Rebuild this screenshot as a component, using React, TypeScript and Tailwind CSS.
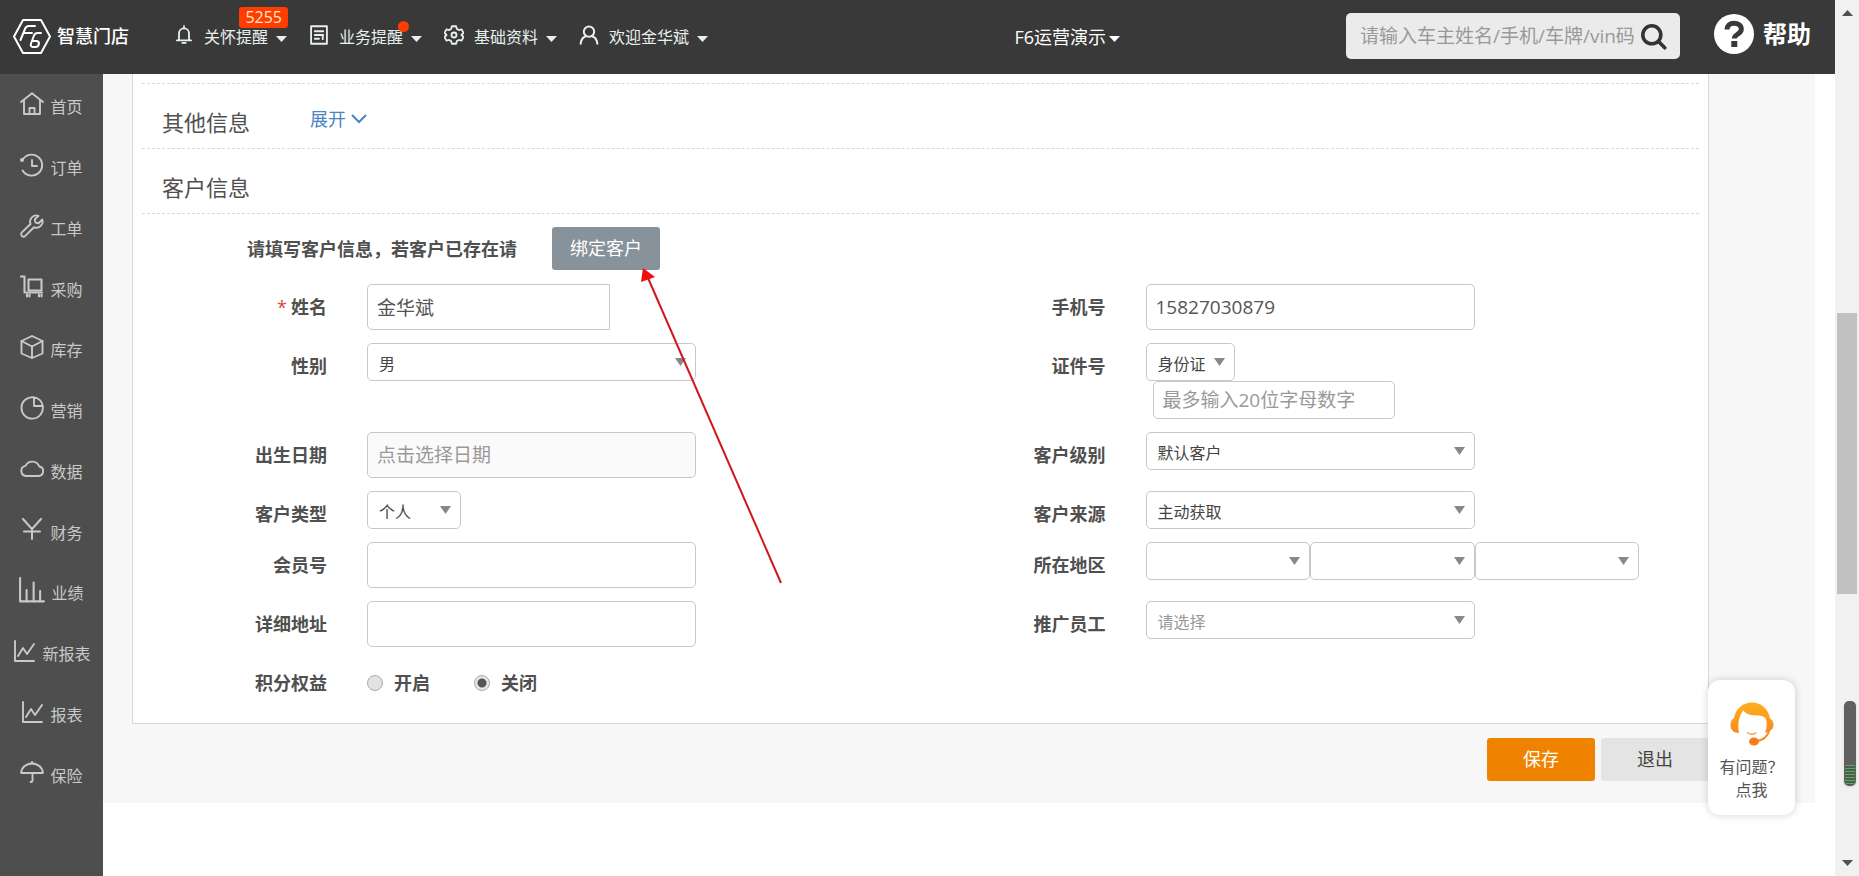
import React, { type ReactNode } from "react";

const ICON = "block shrink-0 fill-none stroke-current";

function Icon({ children, className = "size-6", width = 1.9 }: { children: ReactNode; className?: string; width?: number }) {
  return (
    <svg viewBox="0 0 24 24" className={`${ICON} ${className}`} strokeWidth={width} strokeLinecap="round" strokeLinejoin="round" aria-hidden="true">
      {children}
    </svg>
  );
}

function Caret() {
  return (
    <svg viewBox="0 0 11 6" className="block h-[6px] w-[11px] shrink-0 fill-current" aria-hidden="true">
      <path d="M0 0h11L5.5 6z" />
    </svg>
  );
}

const chartLine = (
  <>
    <path d="M3 2v20h19" />
    <path d="M6 17l5-8 4 6 7-10" />
  </>
);

const sideItems: { label: string; icon: ReactNode }[] = [
  {
    label: "首页",
    icon: (
      <Icon>
        <path d="M1 10L12 1.2 23 10" />
        <path d="M4 8v14h16V8" />
        <path d="M9.5 22v-6h5v6" />
      </Icon>
    ),
  },
  {
    label: "订单",
    icon: (
      <Icon>
        <path d="M2.2 7.5A10.5 10.5 0 1 1 2.6 17.5" />
        <path d="M12 7v6h5" />
        <circle cx="2" cy="7" r="1" fill="currentColor" />
      </Icon>
    ),
  },
  {
    label: "工单",
    icon: (
      <Icon>
        <path d="M18.5 1.8a6.3 6.3 0 0 0-8 8.2L1.9 18.4a2.3 2.3 0 0 0 3.4 3.4L14 13.3a6.3 6.3 0 0 0 8.3-7.8l-3.8 3.7-3-.6-.7-3.1z" />
      </Icon>
    ),
  },
  {
    label: "采购",
    icon: (
      <Icon width={2.1}>
        <path d="M.9 1.5h3.6V17.5H22" />
        <path d="M8.5 4.5h13v11h-13z" />
        <path d="M7 19.5v2M9.500 19.500v2M19 19.500v2M21.500 19.500v2" />
      </Icon>
    ),
  },
  {
    label: "库存",
    icon: (
      <Icon>
        <path d="M12 1l10.500 5v12.500L12 23 1.500 18.500V6z" />
        <path d="M1.500 6L12 11.500 22.500 6M12 11.500V23" />
      </Icon>
    ),
  },
  {
    label: "营销",
    icon: (
      <Icon>
        <path d="M14 1.400A10.700 10.700 0 1 0 22.700 10" />
        <path d="M14 1.400V10h8.700A9.500 9.500 0 0 0 14 1.400z" />
      </Icon>
    ),
  },
  {
    label: "数据",
    icon: (
      <Icon>
        <path d="M6 19h12.500a4.800 4.800 0 0 0 .8-9.500A7.500 7.500 0 0 0 5.500 8.900 5.100 5.100 0 0 0 6 19z" />
      </Icon>
    ),
  },
  {
    label: "财务",
    icon: (
      <Icon width={2}>
        <path d="M3 1l9 10 9-10M12 11v10M4 13.500h16" />
      </Icon>
    ),
  },
  {
    label: "业绩",
    icon: (
      <Icon className="size-[26px]">
        <path d="M1 1v21.500h22M7 22V12M13.500 22V5M19.500 22v-9" />
      </Icon>
    ),
  },
  { label: "新报表", icon: <Icon>{chartLine}</Icon> },
  { label: "报表", icon: <Icon>{chartLine}</Icon> },
  {
    label: "保险",
    icon: (
      <Icon>
        <path d="M1.200 12a10.800 9.500 0 0 1 21.600 0z" />
        <path d="M12 .9v1.600M12.500 12v7.500a1.800 1.800 0 0 1-2 1.500" />
      </Icon>
    ),
  },
];

const CONTROL = "rounded-[5px] border border-[#c8c8c8] text-[#555] outline-none";

function Field({ id, label, required, children }: { id: string; label: string; required?: boolean; children: ReactNode }) {
  return (
    <div className="grid grid-cols-[185px_1fr] gap-x-10">
      <label htmlFor={id} className="pt-[9px] text-right text-[18px] leading-7 font-bold">
        {required && <span className="mr-1 font-normal text-[#d04a48]">*</span>}
        {label}
      </label>
      <div>{children}</div>
    </div>
  );
}

function Select({ id, options, width, muted, name }: { id: string; options: string[]; width: string; muted?: boolean; name?: string }) {
  return (
    <div className={`relative ${width}`}>
      <select
        id={id}
        aria-label={name}
        className={`block h-[38px] w-full appearance-none rounded-[5px] border border-[#c8c8c8] bg-white pt-1 pr-6 pl-[11px] text-[16px] outline-none ${muted ? "text-[#999]" : "text-[#444]"}`}
      >
        {options.map((o) => (
          <option key={o}>{o}</option>
        ))}
      </select>
      <svg viewBox="0 0 11 8" className="pointer-events-none absolute top-[15px] right-[10px] h-2 w-[11px] fill-[#888]" aria-hidden="true">
        <path d="M0 0h11L5.500 8z" />
      </svg>
    </div>
  );
}

function Input({ id, value, placeholder, className = "" }: { id: string; value?: string; placeholder?: string; className?: string }) {
  return (
    <input
      id={id}
      type="text"
      defaultValue={value}
      placeholder={placeholder}
      className={`${CONTROL} block px-[9px] text-[19px] placeholder:text-[#999] ${className}`}
    />
  );
}

function Row({ children }: { children: ReactNode }) {
  return <div className="grid grid-cols-2 pb-[13px]">{children}</div>;
}

function Radio({ id, label, checked }: { id: string; label: string; checked?: boolean }) {
  return (
    <label htmlFor={id} className="flex items-center gap-[11px] text-[18px] leading-7 font-bold">
      <input
        id={id}
        type="radio"
        name="points"
        defaultChecked={checked}
        className="size-4 appearance-none rounded-full border border-[#aaa] bg-[#e2e2e2] checked:bg-[radial-gradient(circle,#555_0_4px,#e6e6e6_5px)]"
      />
      {label}
    </label>
  );
}

function NavItem({ icon, label, badge }: { icon: ReactNode; label: string; badge?: ReactNode }) {
  return (
    <a href="#" className="relative flex items-center text-[#e8f0ee]">
      <span className="-mt-1">{icon}</span>
      <span className="ml-[10px] text-[16px] leading-6">{label}</span>
      <span className="mt-1 ml-2">
        <Caret />
      </span>
      {badge}
    </a>
  );
}

function Header() {
  return (
    <header className="flex h-[74px] shrink-0 items-center bg-[#393939] pr-6 pl-[13px] text-white">
      <a href="#" className="-mt-[2px] flex items-center gap-[6px]">
        <svg viewBox="0 0 38 35" className="block h-[35px] w-[38px] fill-none stroke-current" strokeWidth="2" strokeLinejoin="round" strokeLinecap="round" aria-hidden="true">
          <path d="M10 1h18l9 16.500L28 34H10L1 17.500z" />
          <path d="M22 7h-6q-3 0-4 3L7.500 21M10.500 14h8.500" />
          <path d="M28 14h-3.500q-2.500 0-3.500 2.500L18 24.500q-1 3.500 2 3.500h2.500q2.500 0 3.300-2.500t-1.800-3.500h-4" />
        </svg>
        <span className="text-[18px] leading-6 font-medium">智慧门店</span>
      </a>
      <nav className="ml-[45px] flex items-center gap-[22px]">
        <NavItem
          label="关怀提醒"
          icon={
            <Icon className="size-5" width={2.2}>
              <path d="M3.500 18.500h17M6 18V10a6 6 0 0 1 12 0v8M12 1.500V4M10 21.500h4" />
            </Icon>
          }
          badge={
            <span className="absolute -top-[18px] -right-px rounded-[3px] bg-[#ff3d00] px-[6px] text-[16px] leading-[21px] text-[#ffe9c8]">5255</span>
          }
        />
        <NavItem
          label="业务提醒"
          icon={
            <Icon className="size-5" width={2.2}>
              <path d="M2.500 1.500h19v21h-19zM7 7.500h10M7 12h10M7 16.500h5M16.500 12v5" />
            </Icon>
          }
          badge={<span className="absolute -top-1 right-[13px] size-[11px] rounded-full bg-[#ff3d00]" />}
        />
        <NavItem
          label="基础资料"
          icon={
            <Icon className="size-5" width={2.2}>
              <path d="M9.500 1.500h5l1 3.300 2.200 1.300 3.400-.8 2.300 4.200L21 12l2.400 2.500-2.300 4.200-3.400-.8-2.200 1.300-1 3.300h-5l-1-3.300-2.200-1.300-3.400.8L.6 14.500 3 12 .6 9.500l2.300-4.200 3.400.8 2.200-1.300z" />
              <circle cx="12" cy="12" r="3" />
            </Icon>
          }
        />
        <NavItem
          label="欢迎金华斌"
          icon={
            <Icon className="size-5" width={2.400}>
              <circle cx="12" cy="8" r="6.200" />
              <path d="M2 22.500c.5-5 3-8 6.500-9M22 22.500c-.5-5-3-8-6.500-9" />
            </Icon>
          }
        />
      </nav>
      <button type="button" className="ml-auto flex items-center gap-[3px] text-[18px] leading-6">
        F6运营演示
        <span className="mt-1">
          <Caret />
        </span>
      </button>
      <form className="-mt-[2px] ml-[226px] flex h-[46px] w-[334px] items-center rounded-[5px] bg-[#ebebeb] pr-[13px] pl-[14px]">
        <input
          type="text"
          aria-label="搜索"
          placeholder="请输入车主姓名/手机/车牌/vin码"
          className="min-w-0 flex-1 bg-transparent text-[19px] text-[#555] outline-none placeholder:text-[#999]"
        />
        <button type="button" aria-label="查询" className="text-[#333]">
          <Icon className="size-[27px]" width={3.200}>
            <circle cx="10.500" cy="10.500" r="8" />
            <path d="M16.500 16.500l5.500 5.500" />
          </Icon>
        </button>
      </form>
      <a href="#" className="-mt-[6px] ml-[34px] flex items-center gap-[9px]">
        <svg viewBox="0 0 40 40" className="block size-10" aria-hidden="true">
          <circle cx="20" cy="20" r="20" fill="#fff" />
          <path d="M13 15.500c0-4 3-6.300 7-6.300s7.300 2.300 7.300 6c0 5-7 5-7 9.300" fill="none" stroke="#393939" strokeWidth="5" />
          <path d="M17.300 27h6v6h-6z" fill="#393939" />
        </svg>
        <span className="text-[24px] leading-8 font-bold">帮助</span>
      </a>
    </header>
  );
}

function ScrollTrack() {
  return (
    <div className="relative w-6 shrink-0 bg-[#f1f1f1]" aria-hidden="true">
      <svg viewBox="0 0 11 6" className="absolute top-[10px] left-[7px] h-[6px] w-[11px] fill-[#505050]">
        <path d="M0 6h11L5.500 0z" />
      </svg>
      <div className="absolute inset-x-[2px] top-[313px] h-[281px] bg-[#c1c1c1]" />
      <div className="absolute top-[701px] left-[9px] flex h-[85px] w-3 flex-col justify-end rounded-[5px] bg-[#606060] p-px shadow">
        <div className="h-5 rounded-b-[4px] bg-[repeating-linear-gradient(#4fae62_0_1px,#4f5a50_1px_3px)]" />
      </div>
      <svg viewBox="0 0 11 6" className="absolute bottom-[10px] left-[7px] h-[6px] w-[11px] fill-[#505050]">
        <path d="M0 0h11L5.500 6z" />
      </svg>
    </div>
  );
}

function ServiceIcon() {
  return (
    <svg viewBox="0 0 44 44" className="block size-11" aria-hidden="true">
      <defs>
        <linearGradient id="hair" x1="0" y1="0" x2="0" y2="1">
          <stop offset="0" stopColor="#ffb01f" />
          <stop offset="1" stopColor="#f98a1c" />
        </linearGradient>
      </defs>
      <path
        d="M22 .5C12.500.5 5.500 7 4 16 1.500 17.500.5 20 .5 23c0 4.500 3 8 8.500 8C7.500 23 8.500 15 13 8.500c3 3.500 7.500 5 12 4.700 4.500-.2 8 .8 10.500 2.800 2 5 1.500 10-.5 14.500 2 0 3.500-.5 4.500-1.500 2.500-1 4-3 4-6.500 0-2.500-1.200-4.800-3.500-6C38.500 7 31.500.5 22 .5z"
        fill="url(#hair)"
      />
      <path d="M39.500 28c-2 7-6 10.500-14 11.500" fill="none" stroke="#f98a1c" strokeWidth="2" />
      <ellipse cx="24" cy="39.500" rx="5" ry="4" fill="#f9791c" />
      <path d="M17 30.500q5 3.500 9.500 0" fill="none" stroke="#f0a04a" strokeWidth="1.500" />
    </svg>
  );
}

export default function App() {
  return (
    <div className="relative flex min-h-screen bg-white font-['Open_Sans','Noto_Sans_CJK_SC',sans-serif] text-[#505050]">
      <div className="flex min-w-0 flex-1 flex-col">
        <Header />
        <div className="flex flex-1">
          <aside className="w-[103px] shrink-0 bg-[#4e4e4e] text-[#c9c9c9]">
            <nav className="grid h-[729px] auto-rows-fr">
              {sideItems.map((item) => (
                <a key={item.label} href="#" className="flex items-center justify-center gap-[6px]">
                  {item.icon}
                  <span className="pt-[6px] text-[16px] leading-6">{item.label}</span>
                </a>
              ))}
            </nav>
          </aside>
          <main className="relative min-w-0 flex-1 pr-5">
            <div className="bg-[#f7f7f7] pr-[106px] pb-[22px] pl-[29px]">
              <section className="border border-t-0 border-[#d8d8d8] bg-white px-[9px] pt-[9px] pb-[17px]">
                <div className="flex h-[65px] items-center border-t border-dashed border-[#d8d8d8] pt-3 pl-5">
                  <h2 className="text-[22px] leading-8">其他信息</h2>
                  <button type="button" className="mb-[6px] ml-[60px] flex items-center gap-[5px] text-[18px] leading-7 text-[#4a84c4]">
                    展开
                    <svg viewBox="0 0 16 10" className="block h-[10px] w-4 fill-none stroke-current" strokeWidth="2" aria-hidden="true">
                      <path d="M1 1l7 7 7-7" />
                    </svg>
                  </button>
                </div>
                <div className="flex h-[66px] items-center border-y border-dashed border-[#d8d8d8] pt-3 pl-5">
                  <h2 className="text-[22px] leading-8">客户信息</h2>
                </div>
                <div className="flex items-center pt-[13px] pb-[14px] pl-[105px]">
                  <p className="w-[305px] text-[18px] leading-7 font-bold">请填写客户信息，若客户已存在请</p>
                  <button type="button" className="h-[43px] w-[108px] rounded-[3px] bg-[#87929b] text-[18px] text-white">
                    绑定客户
                  </button>
                </div>
                <Row>
                  <Field id="name" label="姓名" required>
                    <Input id="name" value="金华斌" className="h-[46px] w-[243px] rounded-r-none bg-white" />
                  </Field>
                  <Field id="phone" label="手机号">
                    <Input id="phone" value="15827030879" className="h-[46px] w-[329px] bg-white" />
                  </Field>
                </Row>
                <Row>
                  <Field id="gender" label="性别">
                    <Select id="gender" options={["男", "女"]} width="w-[329px]" />
                  </Field>
                  <Field id="idtype" label="证件号">
                    <Select id="idtype" options={["身份证"]} width="w-[89px]" />
                    <input
                      type="text"
                      aria-label="证件号码"
                      placeholder="最多输入20位字母数字"
                      className={`${CONTROL} ml-[7px] block h-[38px] w-[242px] bg-white px-[9px] text-[19px] placeholder:text-[#999]`}
                    />
                  </Field>
                </Row>
                <Row>
                  <Field id="birth" label="出生日期">
                    <Input id="birth" placeholder="点击选择日期" className="h-[46px] w-[329px] bg-[#fafafa]" />
                  </Field>
                  <Field id="level" label="客户级别">
                    <Select id="level" options={["默认客户"]} width="w-[329px]" />
                  </Field>
                </Row>
                <Row>
                  <Field id="type" label="客户类型">
                    <Select id="type" options={["个人"]} width="w-[94px]" />
                  </Field>
                  <Field id="source" label="客户来源">
                    <Select id="source" options={["主动获取"]} width="w-[329px]" />
                  </Field>
                </Row>
                <Row>
                  <Field id="member" label="会员号">
                    <Input id="member" className="h-[46px] w-[329px] bg-white" />
                  </Field>
                  <Field id="province" label="所在地区">
                    <div className="flex">
                      <Select id="province" options={[""]} width="w-[164px]" />
                      <Select id="city" name="城市" options={[""]} width="w-[165px]" />
                      <Select id="district" name="区县" options={[""]} width="w-[164px]" />
                    </div>
                  </Field>
                </Row>
                <Row>
                  <Field id="address" label="详细地址">
                    <Input id="address" className="h-[46px] w-[329px] bg-white" />
                  </Field>
                  <Field id="promoter" label="推广员工">
                    <Select id="promoter" options={["请选择"]} width="w-[329px]" muted />
                  </Field>
                </Row>
                <div className="grid h-[46px] grid-cols-2">
                  <Field id="on" label="积分权益">
                    <div className="flex gap-11 pt-[9px]">
                      <Radio id="on" label="开启" />
                      <Radio id="off" label="关闭" checked />
                    </div>
                  </Field>
                </div>
              </section>
              <div className="flex justify-end gap-[6px] pt-[14px]">
                <button type="button" className="h-[43px] w-[108px] rounded-[3px] bg-[#ef8300] text-[18px] text-white">
                  保存
                </button>
                <button type="button" className="h-[43px] w-[108px] rounded-[3px] bg-[#e4e4e4] text-[18px] text-[#444]">
                  退出
                </button>
              </div>
            </div>
            <svg viewBox="0 0 144 318" className="pointer-events-none absolute top-[193px] left-[537px] h-[318px] w-36" aria-hidden="true">
              <path d="M8 11l133 305" stroke="#d0181c" strokeWidth="2" />
              <path d="M3 1l12 9L1 15z" fill="#f00d0d" />
            </svg>
            <button type="button" className="absolute top-[606px] right-10 flex h-[135px] w-[87px] flex-col items-center rounded-xl bg-white pt-[22px] text-[16px] leading-[23px] text-[#555] shadow-[0_0_8px_rgba(0,0,0,0.18)]">
              <ServiceIcon />
              <span className="mt-[10px]">有问题？</span>
              <span>点我</span>
            </button>
          </main>
        </div>
      </div>
      <ScrollTrack />
    </div>
  );
}
